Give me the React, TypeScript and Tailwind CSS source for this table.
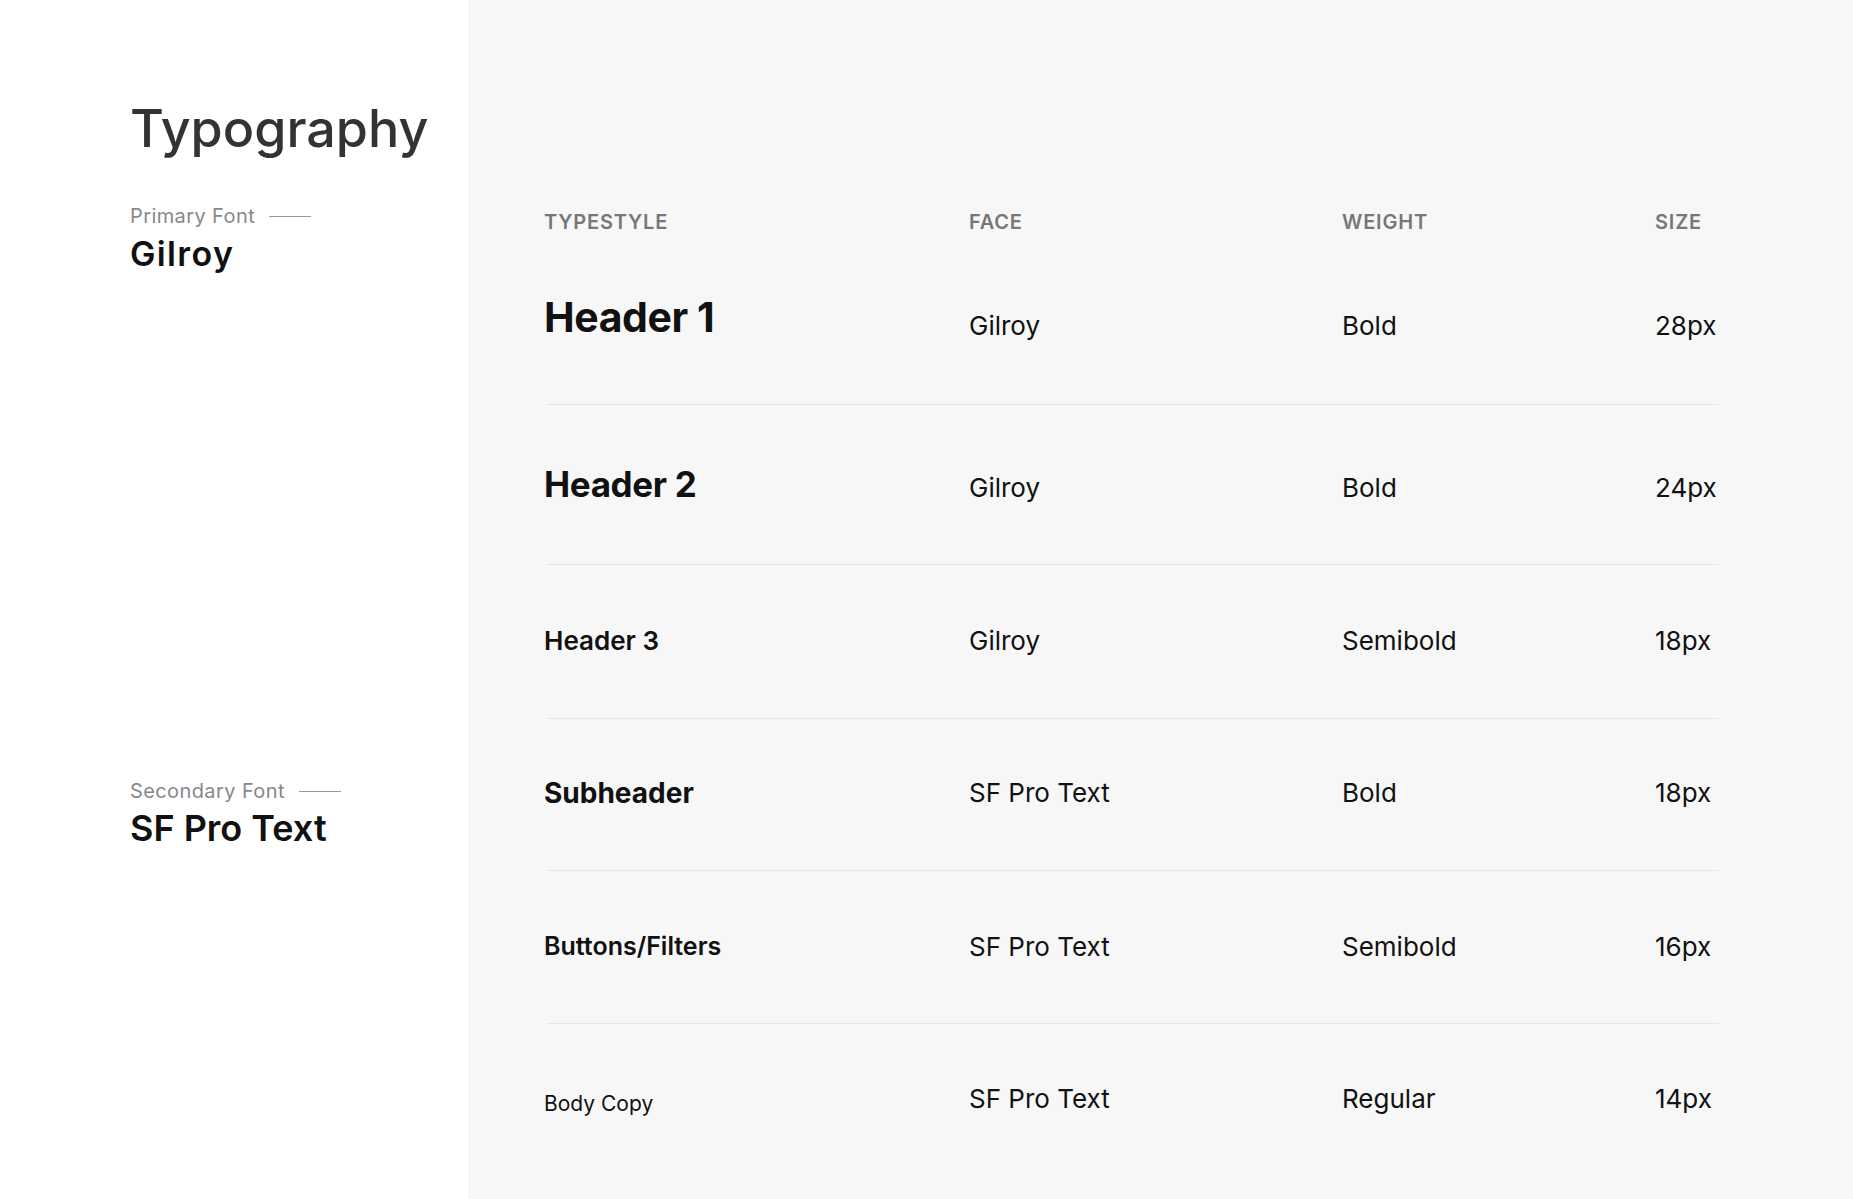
import React from "react"

interface TypeRow {
    id: string, sample: string, sampleClass: string,
    face: string, weight: string, size: string,
    height: string, cellPad: string
}

// cellPad places the 26px value columns, sampleClass carries its own top padding
const rows: TypeRow[] = [
    { id: "h1", sample: "Header 1", sampleClass: "pt-[54px] text-[41px] font-bold tracking-[-0.01em]", face: "Gilroy", weight: "Bold", size: "28px", height: "h-[161px]", cellPad: "pt-[70px]" },
    { id: "h2", sample: "Header 2", sampleClass: "pt-[62px] text-[35px] font-bold tracking-[-0.01em]", face: "Gilroy", weight: "Bold", size: "24px", height: "h-[159px]", cellPad: "pt-[70px]" },
    { id: "h3", sample: "Header 3", sampleClass: "pt-[63px] text-[26px] font-semibold", face: "Gilroy", weight: "Semibold", size: "18px", height: "h-[153px]", cellPad: "pt-[63px]" },
    { id: "sub", sample: "Subheader", sampleClass: "pt-[60px] text-[28px] font-bold", face: "SF Pro Text", weight: "Bold", size: "18px", height: "h-[151px]", cellPad: "pt-[61px]" },
    { id: "btn", sample: "Buttons/Filters", sampleClass: "pt-[63px] text-[25px] font-semibold", face: "SF Pro Text", weight: "Semibold", size: "16px", height: "h-[152px]", cellPad: "pt-[63px]" },
    { id: "body", sample: "Body Copy", sampleClass: "pt-[69px] text-[21px] font-normal", face: "SF Pro Text", weight: "Regular", size: "14px", height: "h-[175px]", cellPad: "pt-[62px]" },
]

function FontLabel({ label }: { label: string }) {
    return (
        <div className="flex items-center gap-[14px]">
            <span className="text-[20px] leading-none tracking-[0.02em] text-[#888]">{label}</span>
            <span className="h-px w-[42px] bg-[#999]" />
        </div>
    )
}

export default function App() {
    return (
        <div className="flex h-[1199px] w-full bg-white font-['Inter','Noto_Sans',sans-serif] text-[#111]">
            <aside className="w-[468px] shrink-0 pl-[130px] pt-[103px]">
                <h1 className="text-[52px] font-medium leading-none text-[#333]">Typography</h1>
                <div className="mt-[51px]">
                    <FontLabel label="Primary Font" />
                </div>
                <p className="mt-[11px] text-[34px] font-semibold leading-none tracking-[0.04em]">Gilroy</p>
                <div className="mt-[510px]">
                    <FontLabel label="Secondary Font" />
                </div>
                <p className="mt-[9px] text-[36px] font-semibold leading-none">SF Pro Text</p>
            </aside>

            <main className="h-full flex-1 bg-[#f7f7f7] pl-[76px] pt-[200px]">
                <div className="w-[1175px]">
                    <div className="grid h-[43px] grid-cols-[425px_373px_313px_1fr] pt-3 text-[20px] font-semibold leading-none tracking-[0.04em] text-[#777]">
                        <span>TYPESTYLE</span>
                        <span>FACE</span>
                        <span>WEIGHT</span>
                        <span>SIZE</span>
                    </div>
                    {rows.map((row, i) => (
                        <div key={row.id}>
                            <div className={`grid grid-cols-[425px_373px_313px_1fr] items-start leading-none ${row.height}`}>
                                <span className={row.sampleClass}>{row.sample}</span>
                                <span className={`text-[26px] ${row.cellPad}`}>{row.face}</span>
                                <span className={`text-[26px] ${row.cellPad}`}>{row.weight}</span>
                                <span className={`text-[26px] ${row.cellPad}`}>{row.size}</span>
                            </div>
                            {i < rows.length - 1 && <div className="ml-[3px] h-px bg-[#e6e6e6]" />}
                        </div>
                    ))}
                </div>
            </main>
        </div>
    )
}
